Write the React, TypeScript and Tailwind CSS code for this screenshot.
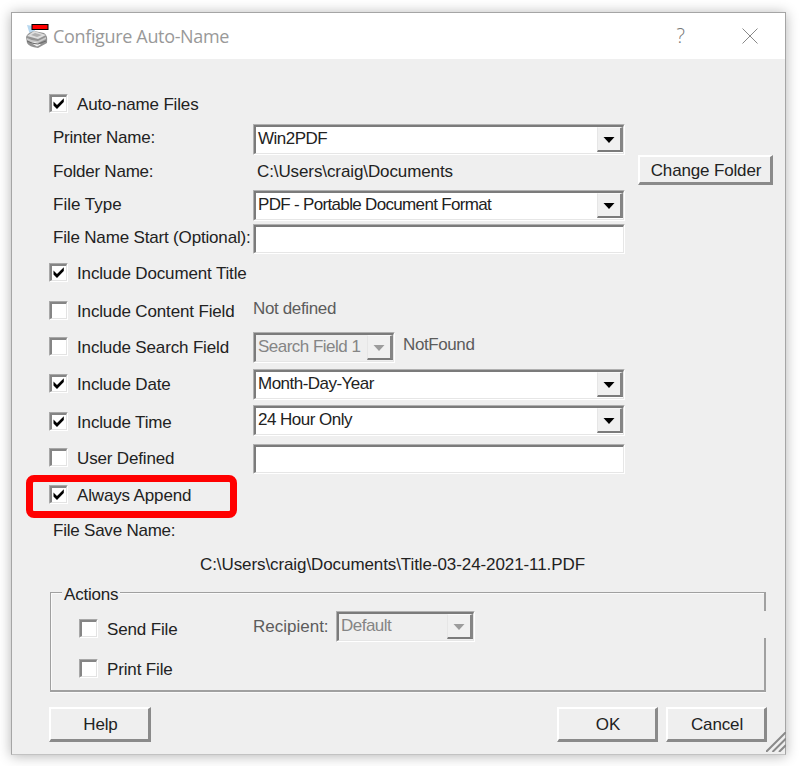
import type { ReactNode } from "react";

function Text({ children, className = "tracking-[-0.15px]" }: { children: ReactNode; className?: string }) {
  return <span className={`block h-5 text-[17px] leading-[22px] whitespace-pre ${className}`}>{children}</span>;
}

function CheckBox({ checked, label, className = "" }: { checked?: boolean; label: string; className?: string }) {
  return (
    <label className={`flex h-5 items-start ${className}`}>
      <span className="h-[19px] w-[19px] shrink-0 border border-t-[#a8a8a8] border-l-[#a8a8a8] border-r-white border-b-white">
        <span className="block h-[17px] w-[17px] border-t-2 border-l-2 border-r border-b border-t-[#858585] border-l-[#858585] border-r-[#e3e3e3] border-b-[#e3e3e3] bg-white">
          {checked && (
            <svg viewBox="0 0 14 14" className="h-3.5 w-3.5">
              <path d="M1.500 4.500 L5 8 L11.800 1.200 V5 L5 12 L1.500 8.500 Z" fill="#000" />
            </svg>
          )}
        </span>
      </span>
      <Text className="ml-[9px] tracking-[-0.15px]">{label}</Text>
    </label>
  );
}

function Arrow({ disabled }: { disabled?: boolean }) {
  return (
    <span className="flex h-[25px] w-[26px] shrink-0 items-center justify-center border-t border-l border-r-[3px] border-b-2 border-t-[#f8f8f8] border-l-[#e6e6e6] border-r-[#858585] border-b-[#7b7b7b] bg-[#f0f0f0]">
      <svg viewBox="0 0 12 6" className="mt-0.5 h-1.5 w-3">
        <path d="M0.500 0 H11.500 L6 6 Z" fill={disabled ? "#9c9c9c" : "#000"} />
      </svg>
    </span>
  );
}

function Field({ className = "", children, disabled }: { className?: string; children?: ReactNode; disabled?: boolean }) {
  return (
    <div className={`shrink-0 border border-t-[#b0b0b0] border-l-[#b0b0b0] border-r-white border-b-white ${className}`}>
      <div
        className={`flex h-full border-t-2 border-l-2 border-r border-b border-t-[#7b7b7b] border-l-[#7b7b7b] border-r-[#e6e6e6] border-b-[#e6e6e6] ${
          disabled ? "bg-[#efefef] text-[#858585]" : "bg-white"
        }`}
      >
        {children}
      </div>
    </div>
  );
}

function Select({ value, className = "", textClass = "tracking-[-0.52px]", disabled }: { value: string; className?: string; textClass?: string; disabled?: boolean }) {
  return (
    <Field className={`h-[31px] ${className}`} disabled={disabled}>
      <Text className={`mt-px ml-0.5 grow ${textClass}`}>{value}</Text>
      <Arrow disabled={disabled} />
    </Field>
  );
}

function Button({ children, className = "" }: { children: ReactNode; className?: string }) {
  return (
    <button
      className={`flex shrink-0 items-center justify-center border-t-2 border-l-2 border-r-[3px] border-b-[3px] border-t-white border-l-white border-r-[#8a8a8a] border-b-[#8a8a8a] bg-[#efefef] pl-0.5 ${className}`}
    >
      {children}
    </button>
  );
}

function PrinterIcon() {
  return (
    <svg viewBox="0 0 24 25" className="h-[25px] w-6">
      <path d="M2 1 L8 2 L11 9 L5 11 Z" fill="#b8d8f0" />
      <path d="M1 13 Q2 9 9 7 L19 9 Q23 11 22 19 L13 24 Q4 23 2 19 Z" fill="#929292" />
      <path d="M2 12 L9 7 L21 11 L13 15 Z" fill="#dedede" />
      <path d="M6 11 L10 9 L17 11 L12 13 Z" fill="#b0b0b0" />
      <path d="M2 14 Q7 17 13 17 L21 13 V15 L13 19 Q6 19 2 16 Z" fill="#c9c9c9" />
      <path d="M6 19 L10 18 L16 20.500 L12 22.500 Z" fill="#f2f2f2" />
      <path d="M2 17 Q7 20 13 20 L21 17" fill="none" stroke="#6a6a6a" />
      <rect x="7" y="0.500" width="16" height="5" fill="#f00" stroke="#000" />
    </svg>
  );
}

export default function App() {
  return (
    <div className="h-[766px] w-[802px] overflow-hidden bg-white pt-3 pl-[11px] font-['Liberation_Sans',Arial,sans-serif] text-[#222]">
      <div className="flex h-[743px] w-[775px] flex-col border border-[#a5a5a5] border-b-[#c2c2c2] bg-[#efefef] shadow-[0_1px_12px_rgba(0,0,0,0.3)]">
        <header className="flex h-[46px] shrink-0 items-center bg-white pl-[13px] text-[#999]">
          <PrinterIcon />
          <span className="ml-1 grow font-['Open_Sans',sans-serif] text-[18px] leading-6 tracking-[-0.34px] whitespace-pre">
            Configure Auto-Name
          </span>
          <span className="mr-[57px] font-['Open_Sans',sans-serif] text-[20px] leading-6 font-light text-[#777]">?</span>
          <svg viewBox="0 0 16 16" className="mr-[27px] h-4 w-4">
            <path d="M0.500 0.500 L15.500 15.500 M15.500 0.500 L0.500 15.500" stroke="#888" fill="none" />
          </svg>
        </header>

        <div className="flex h-[494px] shrink-0 pl-[37px]">
          <div className="flex w-[204px] flex-col pt-[35px]">
            <CheckBox checked label="Auto-name Files" />
            <Text className="mt-[13px] ml-1 tracking-[-0.22px]">Printer Name:</Text>
            <Text className="mt-[14px] ml-1 tracking-[-0.22px]">Folder Name:</Text>
            <Text className="mt-[13px] ml-1">File Type</Text>
            <Text className="mt-[13px] ml-1 tracking-[-0.17px]">File Name Start (Optional):</Text>
            <CheckBox checked className="mt-4" label="Include Document Title" />
            <CheckBox className="mt-[18px]" label="Include Content Field" />
            <CheckBox className="mt-4" label="Include Search Field" />
            <CheckBox checked className="mt-[17px]" label="Include Date" />
            <CheckBox checked className="mt-[18px]" label="Include Time" />
            <CheckBox className="mt-4" label="User Defined" />
            <div className="relative mt-[17px]">
              <CheckBox checked label="Always Append" />
              <div className="absolute -top-[10px] -left-[23px] h-[43px] w-[211px] rounded-lg border-[7px] border-[#f00]" />
            </div>
            <Text className="mt-[15px] ml-1 tracking-[-0.22px]">File Save Name:</Text>
          </div>

          <div className="flex w-[385px] flex-col pt-[65px]">
            <Select className="w-[372px]" value="Win2PDF" />
            <Text className="mt-[6px] ml-1 tracking-[-0.1px]">C:\Users\craig\Documents</Text>
            <Select className="mt-[9px] w-[372px]" textClass="tracking-[-0.67px]" value="PDF - Portable Document Format" />
            <Field className="mt-[3px] h-[30px] w-[372px]" />
            <Text className="mt-[44px] tracking-[-0.36px] text-[#5c5c5c]">Not defined</Text>
            <div className="mt-[14px] flex">
              <Select disabled className="w-[142px]" value="Search Field 1" />
              <Text className="mt-0.5 ml-2 tracking-[-0.4px] text-[#5c5c5c]">NotFound</Text>
            </div>
            <Select className="mt-[6px] w-[372px]" value="Month-Day-Year" />
            <Select className="mt-[5px] w-[372px]" value="24 Hour Only" />
            <Field className="mt-2 h-[30px] w-[372px]" />
          </div>

          <div className="pt-24">
            <Button className="h-[30px] w-[135px]">
              <Text>Change Folder</Text>
            </Button>
          </div>
        </div>

        <Text className="mt-px ml-[188px] shrink-0 tracking-[-0.09px]">C:\Users\craig\Documents\Title-03-24-2021-11.PDF</Text>

        <section className="mt-[10px] ml-[38px] flex h-[108px] w-[716px] shrink-0 flex-col">
          <div className="flex h-[27px] shrink-0">
            <div className="mt-2 w-[12px] border-t border-l border-[#a0a0a0] shadow-[inset_1px_1px_0_#fafafa]" />
            <Text className="mx-[2px] tracking-[-0.2px]">Actions</Text>
            <div className="mt-2 grow border-t border-r-2 border-[#a0a0a0] shadow-[inset_0_1px_0_#fafafa]" />
          </div>
          <div className="flex h-[27px] shrink-0 border-l border-[#a0a0a0] pl-[28px] shadow-[inset_1px_0_0_#fafafa]">
            <CheckBox className="mt-2 w-[174px]" label="Send File" />
            <Text className="mt-[5px] w-[83px] text-[#5c5c5c]">Recipient:</Text>
            <Select disabled className="w-[139px]" value="Default" />
          </div>
          <div className="grow border-r-2 border-b-2 border-l border-[#a0a0a0] pl-[28px] shadow-[inset_1px_0_0_#fafafa,0_1px_0_#fafafa]">
            <CheckBox className="mt-[21px]" label="Print File" />
          </div>
        </section>

        <footer className="mt-[12px] flex pl-[37px]">
          <Button className="mt-[3px] h-[35px] w-[102px]">
            <Text>Help</Text>
          </Button>
          <Button className="mt-[3px] ml-[406px] h-[35px] w-[101px]">
            <Text>OK</Text>
          </Button>
          <Button className="mt-[3px] ml-[8px] h-[35px] w-[101px]">
            <Text>Cancel</Text>
          </Button>
          <svg viewBox="0 0 20 20" className="mt-[28px] -ml-px h-5 w-5 shrink-0">
            <path d="M0 20 L20 0 M6.500 20 L20 6.500 M13 20 L20 13" stroke="#8a8a8a" strokeWidth="2" />
          </svg>
        </footer>
      </div>
    </div>
  );
}
